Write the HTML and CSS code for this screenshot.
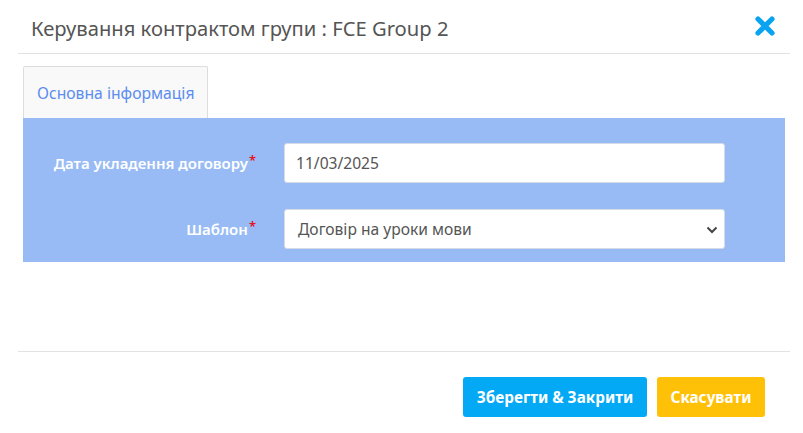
FILE: index.html
```html
<!DOCTYPE html>
<html lang="uk">
<head>
<meta charset="utf-8">
<link rel="stylesheet" href="styles.css">
</head>
<body>
<div class="modal">
  <div class="modal-header">
    <h4 class="modal-title">Керування контрактом групи : FCE Group 2</h4>
    <button class="close" aria-label="close">
      <svg width="22" height="22" viewBox="0 0 22 22"><path d="M4 4 L18 18 M18 4 L4 18" stroke="#0aa3f2" stroke-width="5.2" stroke-linecap="round"/></svg>
    </button>
  </div>
  <div class="modal-body">
    <div class="tabs">
      <div class="tab active">Основна інформація</div>
    </div>
    <div class="panel">
      <div class="row">
        <label class="label">Дата укладення договору<span class="req">*</span></label>
        <div class="field"><div class="input">11/03/2025</div></div>
      </div>
      <div class="row">
        <label class="label">Шаблон<span class="req">*</span></label>
        <div class="field"><div class="input select">Договір на уроки мови
          <svg class="chev" width="12" height="8" viewBox="0 0 12 8"><path d="M1.5 1.5 L6 6 L10.5 1.5" fill="none" stroke="#444" stroke-width="2"/></svg></div></div>
      </div>
    </div>
  </div>
  <div class="modal-footer">
    <button class="btn btn-save">Зберегти &amp; Закрити</button>
    <button class="btn btn-cancel">Скасувати</button>
  </div>
</div>
</body>
</html>
```
FILE: styles.css
```css
* { box-sizing: border-box; }
html, body { margin: 0; padding: 0; background: #fff; }
body { font-family: "Noto Sans", "Open Sans", sans-serif; color: #555; width: 803px; height: 433px; overflow: hidden; }
.modal { padding: 0 13px 0 18px; }
.modal-header { display: flex; align-items: center; justify-content: space-between; height: 54px; border-bottom: 1px solid #e2e2e2; padding: 3px 13px 0 13px; }
.modal-title { margin: 0; font-size: 20.2px; font-weight: 400; color: #555; letter-spacing: 0; }
.close { background: none; border: 0; padding: 0; width: 22px; height: 22px; margin-right: 1px; margin-top: -5px; }
.close svg { display: block; }
.modal-body { padding: 12px 5px 0 5px; height: 298px; border-bottom: 1px solid #e2e2e2; }
.tabs { display: flex; }
.tab { height: 52px; padding: 0 0 0 13px; white-space: nowrap; display: flex; align-items: center; font-size: 15.7px; color: #5b8def; background: #f9f9f9; border: 1px solid #ddd; border-bottom: 0; border-radius: 2px 2px 0 0; width: 185px; }
.panel { background: #98bbf5; padding: 25px 0 13px; width: 762px; display: flex; flex-direction: column; gap: 26px; }
.row { display: flex; align-items: center; height: 40px; }
.label { width: 233px; text-align: right; color: #fff; font-weight: 600; font-size: 15px; padding-right: 0; }
.req { color: #e3121b; position: relative; top: -4px; font-size: 13px; margin-left: 1px; }
.field { margin-left: 28px; width: 441px; }
.input { height: 40px; background: #fff; border: 1px solid #d5dce6; border-radius: 3px; padding: 0 11px; display: flex; align-items: center; font-size: 15.6px; color: #555; }
.select { padding-left: 13px; position: relative; }
.chev { position: absolute; right: 6px; top: 16px; }
.modal-footer { display: flex; justify-content: flex-end; gap: 10px; padding: 25px 25px 0 0; }
.btn { height: 40px; border: 0; border-radius: 3px; color: #fff; font-family: "Noto Sans", sans-serif; font-weight: 700; font-size: 15.3px; padding: 0 10px; }
.btn-save { background: #03a9f4; width: 184px; }
.btn-cancel { background: #ffc107; width: 108px; }
```
